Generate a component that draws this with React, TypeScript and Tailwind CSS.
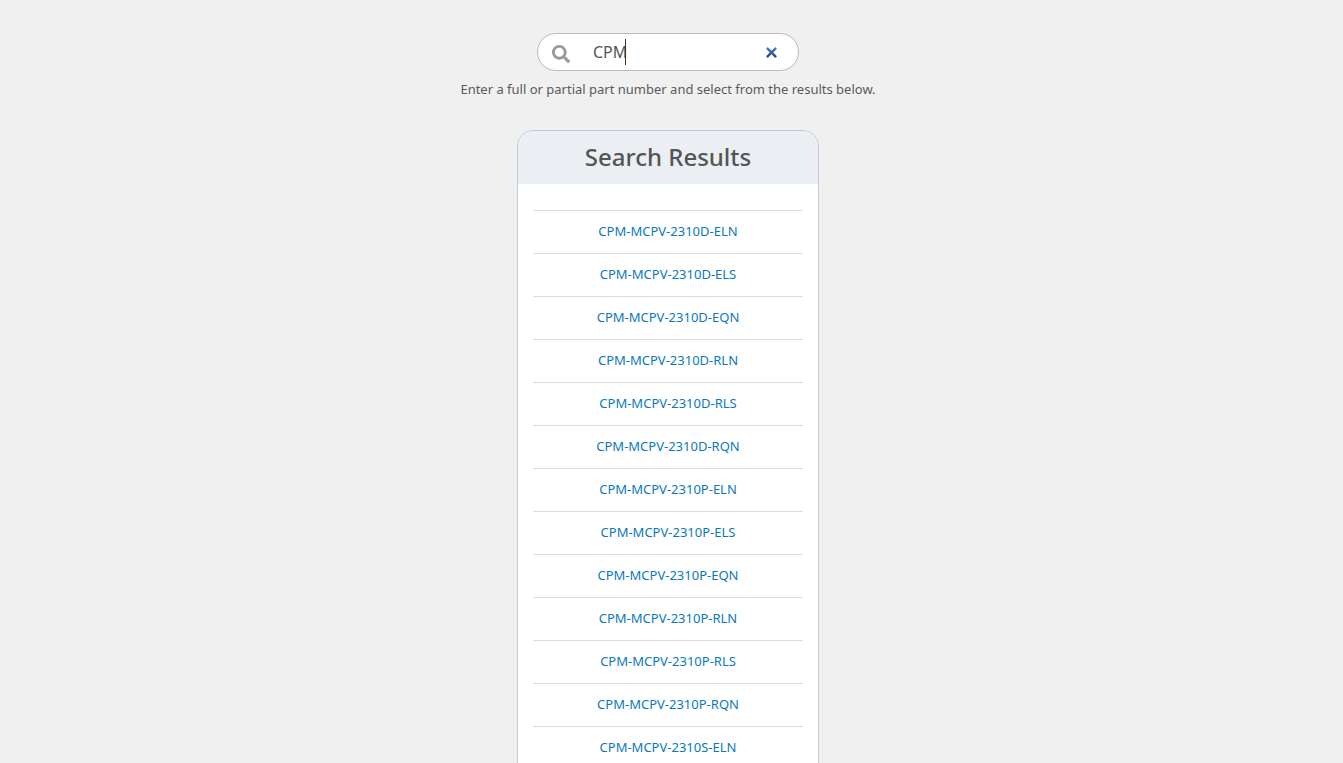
import { useState } from 'react';
import { FaSearch } from 'react-icons/fa';

/** Part numbers listed under the search box */
const PARTS = [
  'CPM-MCPV-2310D-ELN',
  'CPM-MCPV-2310D-ELS',
  'CPM-MCPV-2310D-EQN',
  'CPM-MCPV-2310D-RLN',
  'CPM-MCPV-2310D-RLS',
  'CPM-MCPV-2310D-RQN',
  'CPM-MCPV-2310P-ELN',
  'CPM-MCPV-2310P-ELS',
  'CPM-MCPV-2310P-EQN',
  'CPM-MCPV-2310P-RLN',
  'CPM-MCPV-2310P-RLS',
  'CPM-MCPV-2310P-RQN',
  'CPM-MCPV-2310S-ELN',
];

interface SearchBoxProps {
  value: string;
  onChange: (value: string) => void;
}

function SearchBox({ value, onChange }: SearchBoxProps) {
  return (
    <div
      role="search"
      className="flex h-[38px] w-[262px] shrink-0 items-center rounded-full border border-[#bbbbbb] bg-white pr-[18px] pl-3.5"
    >
      <FaSearch aria-hidden="true" className="mt-1 size-[18px] shrink-0 text-[#999999]" />

      {/* Text and caret */}
      <div className="relative ml-[23px] flex h-[26px] min-w-0 flex-1 items-center">
        <input
          type="text"
          aria-label="Part number"
          value={value}
          onChange={(e) => onChange(e.target.value)}
          className="w-full bg-transparent text-base text-[#555555] outline-none"
        />
        <span aria-hidden="true" className="absolute left-8 h-[26px] w-px bg-[#333333]" />
      </div>

      <button
        type="button"
        aria-label="Clear search"
        onClick={() => onChange('')}
        className="flex size-[17px] shrink-0 items-center justify-center"
      >
        <svg viewBox="0 0 11 11" className="size-[11px]" fill="none" strokeWidth="2.4" strokeLinecap="round">
          <defs>
            <linearGradient id="clear" x1="0" y1="0" x2="0" y2="11" gradientUnits="userSpaceOnUse">
              <stop offset="0" stopColor="#4a7fd0" />
              <stop offset="1" stopColor="#223f80" />
            </linearGradient>
          </defs>
          <path d="M1.6 1.6 9.4 9.4M9.4 1.6 1.6 9.4" stroke="url(#clear)" />
        </svg>
      </button>
    </div>
  );
}

function SearchResults({ parts }: { parts: string[] }) {
  return (
    <section className="mt-[30px] w-[302px] shrink-0 rounded-t-2xl border border-[#bfc9da] bg-white">
      <h2 className="flex h-[53px] items-center justify-center rounded-t-2xl bg-[#ebeef3] pb-0.5 text-2xl font-medium text-[#555555]">
        Search Results
      </h2>
      <ul className="px-[15px] pt-[26px]">
        {parts.map((part) => (
          <li key={part} className="h-[43px] border-t border-[#dddddd] text-center text-[13px] leading-[41px]">
            <a href="#" className="text-[#0b78be]">
              {part}
            </a>
          </li>
        ))}
      </ul>
    </section>
  );
}

export default function App() {
  const [query, setQuery] = useState('CPM');

  return (
    <main className="flex h-screen flex-col items-center overflow-hidden bg-[#f0f0f0] pt-[33px] pr-[7px] font-['Noto_Sans',sans-serif]">
      <SearchBox value={query} onChange={setQuery} />
      <p className="mt-2 text-[13px] leading-[21px] text-[#5a5a5a]">
        Enter a full or partial part number and select from the results below.
      </p>
      <SearchResults parts={PARTS} />
    </main>
  );
}
